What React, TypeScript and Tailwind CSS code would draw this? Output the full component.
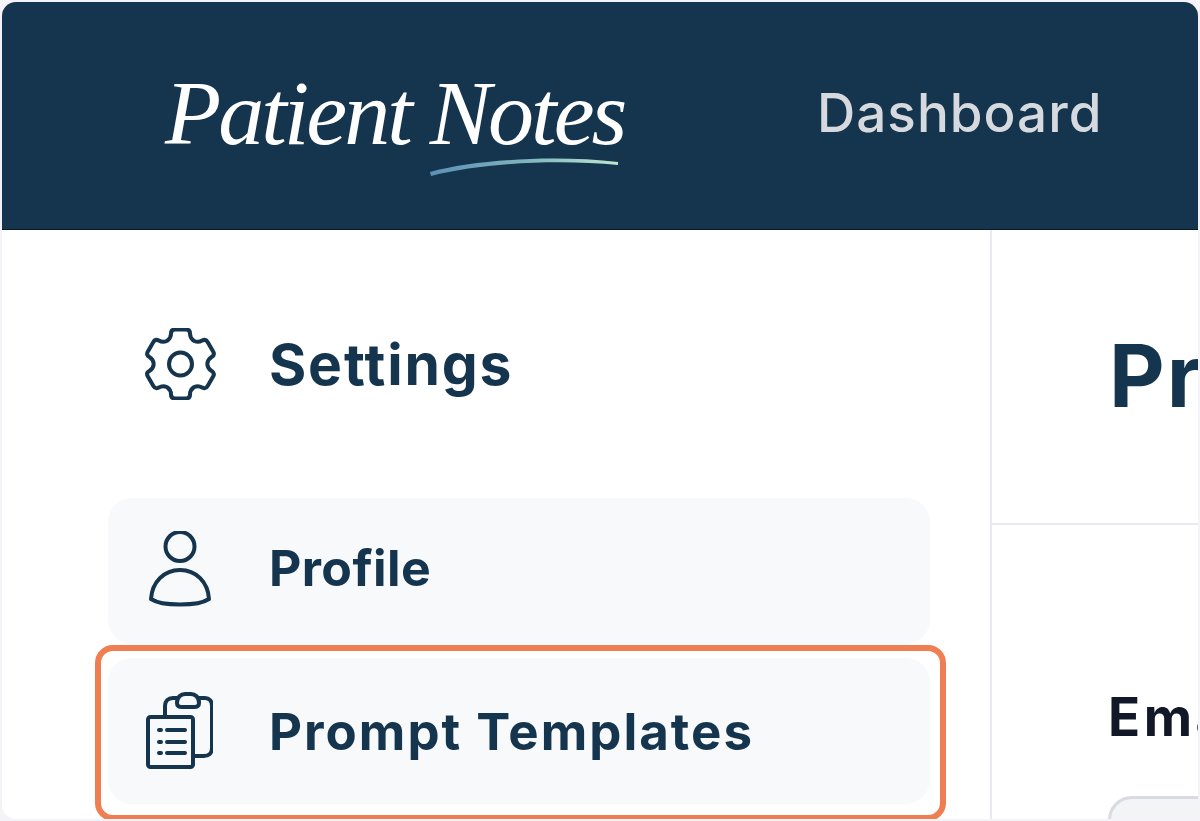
function polar(a: number, u: number, v: number) {
  const r = (a * Math.PI) / 180
  const x = 35.5 + u * Math.cos(r) - v * Math.sin(r)
  const y = 36 + u * Math.sin(r) + v * Math.cos(r)
  return `${x.toFixed(2)} ${y.toFixed(2)}`
}

function gearPath() {
  let d = ''
  for (let i = 0; i < 6; i++) {
    const a = -90 + i * 60
    d += `${i === 0 ? 'M' : 'L'}${polar(a, 23.5, -13)} `
    d += `Q${polar(a, 26, -9.5)} ${polar(a, 30.5, -9.5)} `
    d += `Q${polar(a, 34.5, -9.5)} ${polar(a, 34.5, -5.5)} `
    d += `L${polar(a, 34.5, 5.5)} `
    d += `Q${polar(a, 34.5, 9.5)} ${polar(a, 30.5, 9.5)} `
    d += `Q${polar(a, 26, 9.5)} ${polar(a, 23.5, 13)} `
  }
  return d + 'Z'
}

function GearIcon() {
  return (
    <svg width="71" height="72" viewBox="0 0 71 72" fill="none" stroke="#15354e" strokeWidth="4" strokeLinejoin="round">
      <path d={gearPath()} />
      <circle cx="35.5" cy="36" r="11.5" />
    </svg>
  )
}

function UserIcon() {
  return (
    <svg width="64" height="76" viewBox="0 0 64 76" fill="none" stroke="#15354e" strokeWidth="4">
      <circle cx="32" cy="15.500" r="14.500" />
      <path d="M3 68c1-17 13-29 29-29s28 12 29 29c-6 4-17 5.500-29 5.500S9 72 3 68z" strokeLinejoin="round" />
    </svg>
  )
}

function ClipboardIcon() {
  return (
    <svg width="68" height="78" viewBox="0 0 68 78" fill="none" stroke="#15354e" strokeWidth="4" strokeLinejoin="round">
      <path d="M20 24v-10c0-5 3-8 8-8h5M54 6h6c4 0 7 3 7 8v42c0 5-3 8-8 8h-11" />
      <path d="M32 11c0-6 4-9 8-9h6c4 0 8 3 8 9 0 3-2 4-5 4H37c-3 0-5-1-5-4z" />
      <rect x="3" y="25" width="45" height="50" rx="2.500" />
      <path d="M22 38h18M22 50h18M22 61h18" strokeLinecap="round" />
      <path d="M14 38h2M14 50h2M14 61h2" strokeLinecap="round" />
    </svg>
  )
}

function Logo() {
  return (
    <div className="relative w-[462px] h-[110px] font-['Liberation_Serif',serif] italic text-white text-[92px] leading-[104px] whitespace-nowrap tracking-[-3px]">
      Patient Notes
      <svg className="absolute left-[262px] top-[92px]" width="196" height="28" viewBox="0 0 196 28" fill="none">
        <defs>
          <linearGradient id="swoosh" x1="0" y1="0" x2="1" y2="0">
            <stop offset="0" stopColor="#5d90b8" />
            <stop offset="0.5" stopColor="#7db4bd" />
            <stop offset="1" stopColor="#bfe5cf" />
          </linearGradient>
        </defs>
        <path d="M3 19C50 6 130 2 191 9L191 12C130 6 55 10 4 23z" fill="url(#swoosh)" />
      </svg>
    </div>
  )
}

export default function App() {
  return (
    <div className="w-[1200px] h-[821px] overflow-hidden bg-[#f4f4f8] p-[2px] font-['Inter',sans-serif]">
      <div className="flex flex-col h-full rounded-[14px] overflow-hidden bg-white">
        <header className="flex items-center h-[228px] shrink-0 bg-[#15354e] border-b border-[#0b1a26]">
          <div className="w-[815px] pl-[163px]">
            <Logo />
          </div>
          <span className="text-[53px] font-medium text-[#d6dadf] tracking-[1px] pb-[4px]">Dashboard</span>
        </header>
        <div className="flex flex-1 min-h-0">
          <aside className="w-[990px] shrink-0 border-r-2 border-[#e9e9ef] pl-[106px] pr-[60px]">
            <div className="flex items-center h-[268px]">
              <div className="w-[162px] flex items-center pl-[37px]">
                <GearIcon />
              </div>
              <h2 className="text-[57px] font-bold text-[#15354e] tracking-[1.8px] leading-none -ml-[1px]">Settings</h2>
            </div>
            <nav className="flex flex-col gap-[14px]">
              <a className="flex items-center h-[146px] rounded-[24px] bg-[#f8f9fb]">
                <span className="w-[162px] pl-[40px] flex items-center pb-[5px]"><UserIcon /></span>
                <span className="text-[50px] font-bold text-[#15354e] tracking-[0.4px] leading-none pb-[6px] -ml-[1px]">Profile</span>
              </a>
              <a className="relative flex items-center h-[146px] rounded-[24px] bg-[#f8f9fb]">
                <span className="w-[162px] pl-[37px] flex items-center"><ClipboardIcon /></span>
                <span className="text-[51px] font-bold text-[#15354e] tracking-[2px] leading-none whitespace-nowrap -ml-[1px]">Prompt Templates</span>
                <span className="absolute -left-[13px] -top-[13px] -right-[16px] -bottom-[17px] border-[6px] border-[#ef7e52] rounded-[18px]" />
              </a>
            </nav>
          </aside>
          <main className="flex-1 min-w-0 overflow-hidden">
            <div className="h-[295px] border-b-2 border-[#e9e9ef] flex items-center pl-[117px]">
              <h1 className="text-[86px] font-bold text-[#15354e] whitespace-nowrap tracking-[2px]">Prompt Templates</h1>
            </div>
            <div className="pl-[116px] pt-[166px]">
              <label className="block text-[53px] font-bold text-[#111827] whitespace-nowrap leading-none tracking-[3.5px]">Email</label>
              <div className="mt-[52px] w-[600px] h-[120px] rounded-[24px] bg-[#f3f4f6] border-[3px] border-[#d9dbe0]" />
            </div>
          </main>
        </div>
      </div>
    </div>
  )
}
